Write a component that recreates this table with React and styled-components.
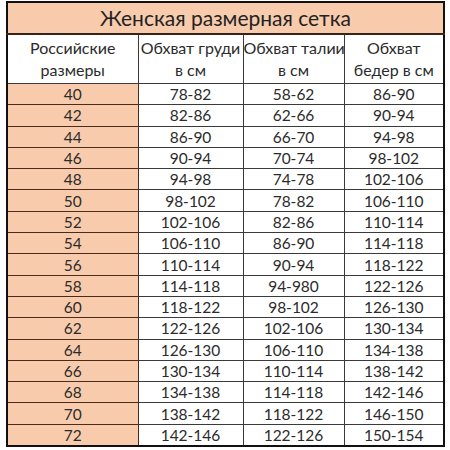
import React from 'react';
import styled, { createGlobalStyle } from 'styled-components';

const GlobalStyle = createGlobalStyle`
  html, body {
    margin: 0;
    padding: 0;
    background: #ffffff;
  }
`

const Page = styled.div`
  width: 450px;
  height: 450px;
  padding: 1px 0 0 6px;
  box-sizing: border-box;
  font-family: Lato, "Open Sans", "Liberation Sans", sans-serif;
  color: #2b2b2b;
`

const Table = styled.table`
  border-collapse: collapse;
  width: 437px;
  table-layout: fixed;
  border: 2px solid #111;
`

const TitleCell = styled.th`
  background: #f8cbad;
  font-weight: 400;
  font-size: 21px;
  height: 30px;
  padding: 0;
  line-height: 30px;
  border-bottom: 2px solid #3a2418;
  color: #222;
`

const HeadCell = styled.th`
  font-weight: 400;
  font-size: 16px;
  line-height: 22px;
  height: 48px;
  padding: 0;
  white-space: nowrap;
  border: 1px solid #3a3a3a;
`

const Cell = styled.td`
  text-align: center;
  font-size: 15.5px;
  height: 20.3px;
  padding: 0;
  line-height: 20px;
  border: 1px solid ${p => (p.$size ? '#4a2c1c' : '#3a3a3a')};
  background: ${p => (p.$size ? '#f8cbad' : '#ffffff')};
`

const rows = [
  ['40', '78-82', '58-62', '86-90'],
  ['42', '82-86', '62-66', '90-94'],
  ['44', '86-90', '66-70', '94-98'],
  ['46', '90-94', '70-74', '98-102'],
  ['48', '94-98', '74-78', '102-106'],
  ['50', '98-102', '78-82', '106-110'],
  ['52', '102-106', '82-86', '110-114'],
  ['54', '106-110', '86-90', '114-118'],
  ['56', '110-114', '90-94', '118-122'],
  ['58', '114-118', '94-980', '122-126'],
  ['60', '118-122', '98-102', '126-130'],
  ['62', '122-126', '102-106', '130-134'],
  ['64', '126-130', '106-110', '134-138'],
  ['66', '130-134', '110-114', '138-142'],
  ['68', '134-138', '114-118', '142-146'],
  ['70', '138-142', '118-122', '146-150'],
  ['72', '142-146', '122-126', '150-154'],
]

export default function App() {
  return (
    <Page>
      <GlobalStyle />
      <Table>
        <colgroup>
          <col style={{ width: 131 }} />
          <col style={{ width: 105 }} />
          <col style={{ width: 101 }} />
          <col style={{ width: 100 }} />
        </colgroup>
        <thead>
          <tr>
            <TitleCell colSpan={4}>Женская размерная сетка</TitleCell>
          </tr>
          <tr>
            <HeadCell>Российские<br />размеры</HeadCell>
            <HeadCell>Обхват груди<br />в см</HeadCell>
            <HeadCell>Обхват талии<br />в см</HeadCell>
            <HeadCell>Обхват<br />бедер в см</HeadCell>
          </tr>
        </thead>
        <tbody>
          {rows.map((r) => (
            <tr key={r[0]}>
              <Cell $size>{r[0]}</Cell>
              <Cell>{r[1]}</Cell>
              <Cell>{r[2]}</Cell>
              <Cell>{r[3]}</Cell>
            </tr>
          ))}
        </tbody>
      </Table>
    </Page>
  )
}
